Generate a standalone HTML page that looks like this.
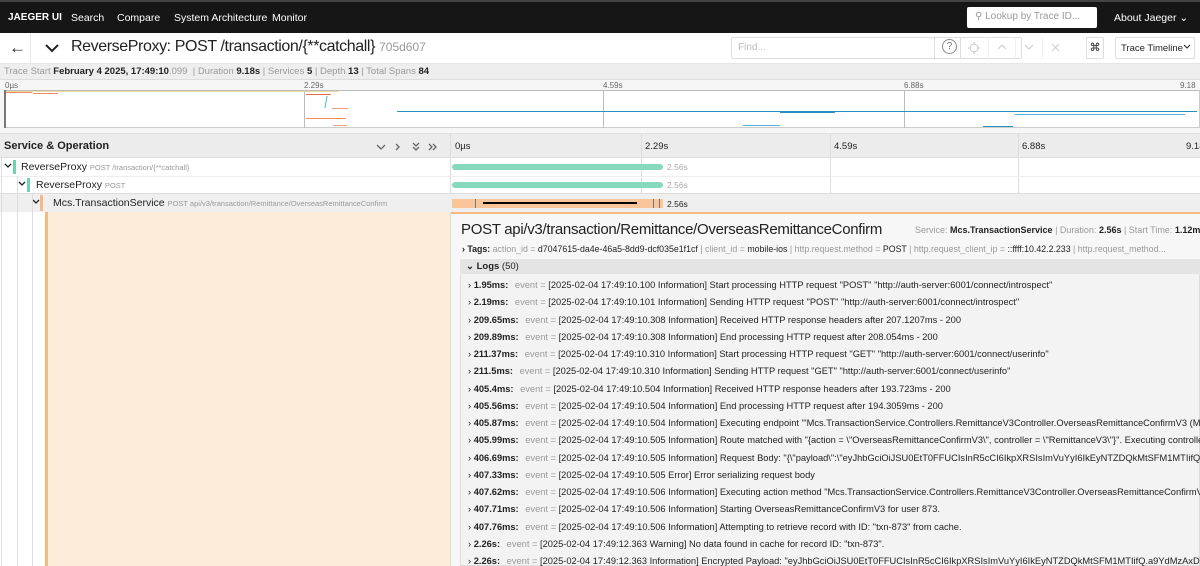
<!DOCTYPE html>
<html><head><meta charset="utf-8"><style>
*{box-sizing:border-box;margin:0;padding:0}
body{width:1200px;height:566px;overflow:hidden;font-family:"Liberation Sans",sans-serif;background:#fff;position:relative;color:#222}
.a{position:absolute;white-space:nowrap}
.nav{left:0;top:0;width:1200px;height:33px;background:#161616;border-top:2px solid #444}
.nav span{position:absolute;top:10px;color:#fff;font-size:10.5px}
.g{color:#999}
.vl{position:absolute;width:1px;background:#ddd}
.log{position:absolute;left:468px;font-size:9.3px;white-space:nowrap;color:#222}
.log i{font-style:normal;font-weight:bold;margin-right:4px}
.log .k{color:#999}
.clip{position:absolute;overflow:hidden}
</style></head><body>
<div class="a nav">
<span style="left:8px;font-weight:bold;font-size:10px">JAEGER UI</span>
<span style="left:71px">Search</span>
<span style="left:117px">Compare</span>
<span style="left:174px">System Architecture</span>
<span style="left:272px">Monitor</span>
<div style="position:absolute;left:967px;top:5px;width:130px;height:21px;background:#fff;border-radius:2px"><span style="left:8px;top:4px;color:#999;font-size:10px">&#9906; Lookup by Trace ID...</span></div>
<span style="left:1114px">About Jaeger &#8964;</span>
</div>
<div class="a" style="left:0;top:33px;width:1200px;height:31px;background:#fff;border-bottom:1px solid #e6e6e6"></div>
<div class="a" style="left:30px;top:33px;width:1px;height:31px;background:#e6e6e6"></div>
<div class="a" style="left:9px;top:38px;font-size:17px">&#8592;</div>
<svg class="a" style="left:44px;top:42px" width="16" height="12"><path d="M2 3l6 6 6-6" stroke="#222" stroke-width="2" fill="none"/></svg>
<div class="a" style="left:71px;top:38px;font-size:16px;letter-spacing:-0.4px">ReverseProxy: POST /transaction/{**catchall} <span style="color:#999;font-size:12px;letter-spacing:0">705d607</span></div>
<div class="a" style="left:731px;top:37px;width:291px;height:22px;border:1px solid #ddd;border-radius:2px"></div>
<div class="a" style="left:738px;top:42px;font-size:10px;color:#bbb">Find...</div>
<div class="a" style="left:934px;top:37px;width:1px;height:22px;background:#ddd"></div>
<div class="a" style="left:942px;top:39px;width:15px;height:15px;border:1px solid #888;border-radius:50%;font-size:10px;color:#777;text-align:center;line-height:13px">?</div>
<div class="a" style="left:960px;top:37px;width:1px;height:22px;background:#ddd"></div>
<div class="a" style="left:988px;top:37px;width:1px;height:22px;background:#eee"></div>
<div class="a" style="left:1015px;top:37px;width:1px;height:22px;background:#eee"></div>
<div class="a" style="left:1042px;top:37px;width:1px;height:22px;background:#eee"></div>
<svg class="a" style="left:967px;top:41px" width="14" height="14"><circle cx="7" cy="7" r="4" stroke="#ccc" fill="none"/><path d="M7 1v3M7 10v3M1 7h3M10 7h3" stroke="#ccc"/></svg>
<svg class="a" style="left:997px;top:43px" width="10" height="8"><path d="M1 6l4-4 4 4" stroke="#ccc" fill="none"/></svg>
<svg class="a" style="left:1024px;top:43px" width="10" height="8"><path d="M1 2l4 4 4-4" stroke="#ccc" fill="none"/></svg>
<svg class="a" style="left:1051px;top:43px" width="9" height="9"><path d="M1 1l7 7M8 1l-7 7" stroke="#ccc"/></svg>
<div class="a" style="left:1086px;top:37px;width:18px;height:22px;border:1px solid #ddd;border-radius:2px;font-size:11px;text-align:center;line-height:20px">&#8984;</div>
<div class="a" style="left:1115px;top:37px;width:80px;height:22px;border:1px solid #ddd;border-radius:2px;font-size:9.5px;padding:5px 0 0 5px">Trace Timeline</div>
<svg class="a" style="left:1183px;top:44px" width="8" height="6"><path d="M1 1l3 3 3-3" stroke="#222" fill="none"/></svg>
<div class="a" style="left:0;top:64px;width:1200px;height:16px;background:#eee;border-bottom:1px solid #ddd"></div>
<div class="a" style="left:4px;top:66px;font-size:9.5px;color:#999">Trace Start <b style="color:#222">February 4 2025, 17:49:10</b>.099 &nbsp;| Duration <b style="color:#222">9.18s</b> | Services <b style="color:#222">5</b> | Depth <b style="color:#222">13</b> | Total Spans <b style="color:#222">84</b></div>
<div class="a" style="left:0;top:80px;width:1200px;height:53px;background:#f6f6f6"></div>
<div class="a" style="left:5px;top:81px;font-size:8px;color:#666">0µs</div>
<div class="a" style="left:304px;top:81px;font-size:8px;color:#666">2.29s</div>
<div class="a" style="left:603px;top:81px;font-size:8px;color:#666">4.59s</div>
<div class="a" style="left:904px;top:81px;font-size:8px;color:#666">6.88s</div>
<div class="a" style="left:1180px;top:81px;font-size:8px;color:#666">9.18</div>
<div class="a" style="left:4px;top:90px;width:1196px;height:38px;background:#fff;border:1px solid #ccc;border-top:1px solid #bbb"></div>
<div class="a" style="left:4px;top:90px;width:2px;height:38px;background:#777"></div>
<div class="a" style="left:304px;top:90px;width:1px;height:38px;background:#bbb"></div>
<div class="a" style="left:603px;top:90px;width:1px;height:38px;background:#bbb"></div>
<div class="a" style="left:904px;top:90px;width:1px;height:38px;background:#bbb"></div>
<div class="a" style="left:6px;top:91px;width:333px;height:1px;background:#f0d9a0"></div>
<div class="a" style="left:6px;top:92px;width:26px;height:1px;background:#f08a60"></div>
<div class="a" style="left:33px;top:93px;width:25px;height:1px;background:#f08a60"></div>
<div class="a" style="left:306px;top:94px;width:25px;height:1px;background:#e86a40"></div>
<div class="a" style="left:323px;top:96px;width:6px;height:12px;background:linear-gradient(100deg,transparent 40%,#1aa 50%,transparent 60%)"></div>
<div class="a" style="left:332px;top:108px;width:16px;height:1px;background:#f0a080"></div>
<div class="a" style="left:306px;top:118px;width:40px;height:1px;background:#f08a60"></div>
<div class="a" style="left:333px;top:125px;width:14px;height:1px;background:#f0a080"></div>
<div class="a" style="left:397px;top:111px;width:800px;height:1px;background:#2a8fc0"></div>
<div class="a" style="left:780px;top:112px;width:55px;height:1px;background:#2a8fc0"></div>
<div class="a" style="left:1015px;top:114px;width:170px;height:1px;background:#5ab0d8"></div>
<div class="a" style="left:743px;top:125px;width:37px;height:1px;background:#5ab0d8"></div>
<div class="a" style="left:983px;top:126px;width:30px;height:1px;background:#2a8fc0"></div>
<div class="a" style="left:0;top:133px;width:1200px;height:25px;background:#ececec;border-bottom:1px solid #ddd;border-top:1px solid #e0e0e0"></div>
<div class="a" style="left:4px;top:140px;font-size:11px;font-weight:bold">Service &amp; Operation</div>
<svg class="a" style="left:374px;top:142px" width="66" height="10"><path d="M3 3l4 4 4-4M22 2l3 3-3 3M39 1l3 3 3-3M39 5l3 3 3-3M55 2l3 3-3 3M59 2l3 3-3 3" stroke="#666" stroke-width="1.3" fill="none"/></svg>
<div class="a" style="left:450px;top:133px;width:1px;height:433px;background:#ddd"></div>
<div class="a" style="left:455px;top:141px;font-size:9.5px">0µs</div>
<div class="a" style="left:645px;top:141px;font-size:9.5px">2.29s</div>
<div class="a" style="left:834px;top:141px;font-size:9.5px">4.59s</div>
<div class="a" style="left:1022px;top:141px;font-size:9.5px">6.88s</div>
<div class="a" style="left:1186px;top:141px;font-size:9.5px">9.18</div>
<div class="vl" style="left:641px;top:133px;height:79px"></div>
<div class="vl" style="left:830px;top:133px;height:79px"></div>
<div class="vl" style="left:1018px;top:133px;height:79px"></div>
<div class="a" style="left:0;top:176px;width:1200px;height:1px;background:#eee"></div>
<div class="a" style="left:0;top:193px;width:1200px;height:19px;background:#efefef;border-top:1px solid #ddd"></div>
<svg class="a" style="left:4px;top:163px" width="8" height="6"><path d="M1 1l3 3 3-3" stroke="#222" stroke-width="1.3" fill="none"/></svg>
<div class="a" style="left:13px;top:160px;width:3px;height:14px;background:#6fd3b0"></div>
<div class="a" style="left:21px;top:161px;font-size:10.5px">ReverseProxy <span class="g" style="font-size:7.5px">POST /transaction/{**catchall}</span></div>
<svg class="a" style="left:18px;top:181px" width="8" height="6"><path d="M1 1l3 3 3-3" stroke="#222" stroke-width="1.3" fill="none"/></svg>
<div class="a" style="left:27px;top:178px;width:3px;height:14px;background:#6fd3b0"></div>
<div class="a" style="left:36px;top:179px;font-size:10.5px">ReverseProxy <span class="g" style="font-size:7.5px">POST</span></div>
<svg class="a" style="left:32px;top:199px" width="8" height="6"><path d="M1 1l3 3 3-3" stroke="#222" stroke-width="1.3" fill="none"/></svg>
<div class="a" style="left:40px;top:195px;width:3px;height:16px;background:#f8b884"></div>
<div class="a" style="left:53px;top:197px;font-size:10.5px">Mcs.TransactionService <span class="g" style="font-size:7.5px">POST api/v3/transaction/Remittance/OverseasRemittanceConfirm</span></div>
<div class="a" style="left:452px;top:164px;width:211px;height:6px;background:#86d9bd;border-radius:3px"></div>
<div class="a" style="left:667px;top:162px;font-size:8.5px;color:#aaa">2.56s</div>
<div class="a" style="left:452px;top:182px;width:211px;height:6px;background:#86d9bd;border-radius:3px"></div>
<div class="a" style="left:667px;top:180px;font-size:8.5px;color:#aaa">2.56s</div>
<div class="a" style="left:452px;top:199px;width:211px;height:9px;background:#f9c59a"></div>
<div class="a" style="left:483px;top:202px;width:154px;height:2px;background:#000"></div>
<div class="a" style="left:475px;top:199px;width:1px;height:9px;background:#777"></div>
<div class="a" style="left:653px;top:199px;width:7px;height:9px;border-left:1px solid #777;border-right:1px solid #777"></div>
<div class="a" style="left:667px;top:199px;font-size:8.5px">2.56s</div>
<div class="vl" style="left:1px;top:158px;height:408px"></div>
<div class="vl" style="left:17px;top:176px;height:390px"></div>
<div class="vl" style="left:32px;top:194px;height:372px"></div>
<div class="a" style="left:45px;top:212px;width:405px;height:354px;background:#fdecda;border-left:3px solid #f8b884"></div>
<div class="clip" style="left:451px;top:212px;width:749px;height:354px;background:#f7f7f7;border-top:2px solid #f8b884">
</div>
<div class="a" style="left:461px;top:221px;font-size:15px;letter-spacing:-0.3px">POST api/v3/transaction/Remittance/OverseasRemittanceConfirm</div>
<div class="a" style="left:915px;top:225px;font-size:9px;color:#999">Service: <b style="color:#222">Mcs.TransactionService</b> | Duration: <b style="color:#222">2.56s</b> | Start Time: <b style="color:#222">1.12ms</b></div>
<div class="a" style="left:462px;top:244px;font-size:8.8px;color:#999"><b style="color:#222">&#8250; Tags:</b> action_id = <span style="color:#222">d7047615-da4e-46a5-8dd9-dcf035e1f1cf</span> | client_id = <span style="color:#222">mobile-ios</span> | http.request.method = <span style="color:#222">POST</span> | http.request_client_ip = <span style="color:#222">::ffff:10.42.2.233</span> | http.request_method...</div>
<div class="a" style="left:460px;top:259px;width:740px;height:307px;border:1px solid #ddd;background:#f3f3f3"></div>
<div class="a" style="left:460px;top:259px;width:740px;height:15px;background:#e4e4e4"></div>
<div class="a" style="left:466px;top:261px;font-size:9.5px"><b>&#8964; Logs</b> (50)</div>
<div class="log" style="top:280px">&#8250; <i>1.95ms:</i> <span class="k">event =</span> [2025-02-04 17:49:10.100 Information] Start processing HTTP request "POST" "http://auth-server:6001/connect/introspect"</div>
<div class="log" style="top:297px">&#8250; <i>2.19ms:</i> <span class="k">event =</span> [2025-02-04 17:49:10.101 Information] Sending HTTP request "POST" "http://auth-server:6001/connect/introspect"</div>
<div class="log" style="top:315px">&#8250; <i>209.65ms:</i> <span class="k">event =</span> [2025-02-04 17:49:10.308 Information] Received HTTP response headers after 207.1207ms - 200</div>
<div class="log" style="top:332px">&#8250; <i>209.89ms:</i> <span class="k">event =</span> [2025-02-04 17:49:10.308 Information] End processing HTTP request after 208.054ms - 200</div>
<div class="log" style="top:349px">&#8250; <i>211.37ms:</i> <span class="k">event =</span> [2025-02-04 17:49:10.310 Information] Start processing HTTP request "GET" "http://auth-server:6001/connect/userinfo"</div>
<div class="log" style="top:366px">&#8250; <i>211.5ms:</i> <span class="k">event =</span> [2025-02-04 17:49:10.310 Information] Sending HTTP request "GET" "http://auth-server:6001/connect/userinfo"</div>
<div class="log" style="top:384px">&#8250; <i>405.4ms:</i> <span class="k">event =</span> [2025-02-04 17:49:10.504 Information] Received HTTP response headers after 193.723ms - 200</div>
<div class="log" style="top:401px">&#8250; <i>405.56ms:</i> <span class="k">event =</span> [2025-02-04 17:49:10.504 Information] End processing HTTP request after 194.3059ms - 200</div>
<div class="log" style="top:418px">&#8250; <i>405.87ms:</i> <span class="k">event =</span> [2025-02-04 17:49:10.504 Information] Executing endpoint '"Mcs.TransactionService.Controllers.RemittanceV3Controller.OverseasRemittanceConfirmV3 (Mcs.Tra</div>
<div class="log" style="top:435px">&#8250; <i>405.99ms:</i> <span class="k">event =</span> [2025-02-04 17:49:10.505 Information] Route matched with "{action = \"OverseasRemittanceConfirmV3\", controller = \"RemittanceV3\"}". Executing controller a</div>
<div class="log" style="top:453px">&#8250; <i>406.69ms:</i> <span class="k">event =</span> [2025-02-04 17:49:10.505 Information] Request Body: "{\"payload\":\"eyJhbGciOiJSU0EtT0FFUCIsInR5cCI6IkpXRSIsImVuYyI6IkEyNTZDQkMtSFM1MTIifQ.a9YdMzA</div>
<div class="log" style="top:470px">&#8250; <i>407.33ms:</i> <span class="k">event =</span> [2025-02-04 17:49:10.505 Error] Error serializing request body</div>
<div class="log" style="top:487px">&#8250; <i>407.62ms:</i> <span class="k">event =</span> [2025-02-04 17:49:10.506 Information] Executing action method "Mcs.TransactionService.Controllers.RemittanceV3Controller.OverseasRemittanceConfirmV3 (Mc</div>
<div class="log" style="top:504px">&#8250; <i>407.71ms:</i> <span class="k">event =</span> [2025-02-04 17:49:10.506 Information] Starting OverseasRemittanceConfirmV3 for user 873.</div>
<div class="log" style="top:522px">&#8250; <i>407.76ms:</i> <span class="k">event =</span> [2025-02-04 17:49:10.506 Information] Attempting to retrieve record with ID: "txn-873" from cache.</div>
<div class="log" style="top:539px">&#8250; <i>2.26s:</i> <span class="k">event =</span> [2025-02-04 17:49:12.363 Warning] No data found in cache for record ID: "txn-873".</div>
<div class="log" style="top:556px">&#8250; <i>2.26s:</i> <span class="k">event =</span> [2025-02-04 17:49:12.363 Information] Encrypted Payload: "eyJhbGciOiJSU0EtT0FFUCIsInR5cCI6IkpXRSIsImVuYyI6IkEyNTZDQkMtSFM1MTIifQ.a9YdMzAxDkfOiK0lkxPE</div>
</body></html>
